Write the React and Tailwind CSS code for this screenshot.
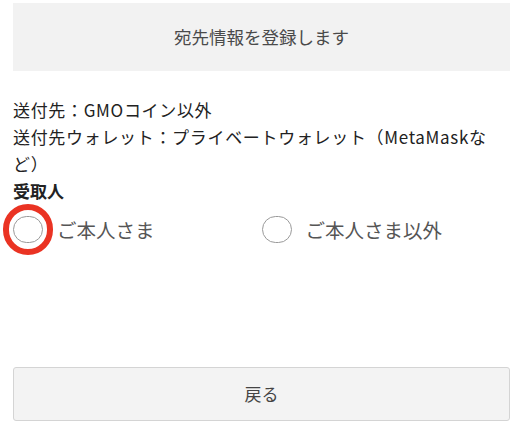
const font = { fontFamily: '"Noto Sans CJK JP", "Noto Sans", sans-serif' };

const Radio = ({ label, marked }) => {
    return (
        <label className="flex items-center gap-[14px]">
            <span className="relative block w-[30px] h-[27px]">
                <span className="block w-full h-full rounded-full border-[1.5px] border-[#9a9a9a] bg-white" />
                {marked && (
                    <span className="absolute left-[-10px] top-[-12px] w-[50px] h-[51px] rounded-full border-[6px] border-[#ea3323]" />
                )}
            </span>
            <span className="text-[19.5px] leading-[27px] text-[#555]">{label}</span>
        </label>
    );
};

export default function App() {
    return (
        <div className="w-[523px] h-[430px] bg-white flex flex-col px-[13px]" style={font}>
            <div className="mt-[3px] h-[68px] bg-[#f2f2f2] flex items-center justify-center">
                <span className="text-[17.5px] text-[#4a4a4a]">宛先情報を登録します</span>
            </div>

            <div className="mt-[25px] text-[17px] leading-[27px] text-[#222] tracking-[0.04em] w-[492px]">
                <p>送付先：GMOコイン以外</p>
                <p>送付先ウォレット：プライベートウォレット（MetaMaskなど）</p>
                <p className="font-bold tracking-normal">受取人</p>
            </div>

            <div className="mt-[12px] grid grid-cols-2">
                <Radio label="ご本人さま" marked />
                <Radio label="ご本人さま以外" />
            </div>

            <button className="mt-auto mb-[9px] h-[54px] w-full rounded-[3px] border border-[#d4d4d4] bg-[#f3f3f3] text-[17px] text-[#444]">
                戻る
            </button>
        </div>
    );
}
